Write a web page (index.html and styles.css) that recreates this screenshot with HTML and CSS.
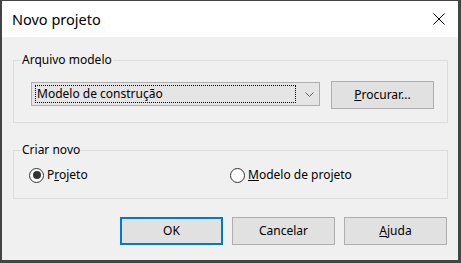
FILE: index.html
```html
<!DOCTYPE html>
<html lang="pt">
<head>
<meta charset="utf-8">
<title>Novo projeto</title>
<link rel="stylesheet" href="styles.css">
</head>
<body>
<div class="window">
  <div class="titlebar">
    <span class="title">Novo projeto</span>
    <svg class="close" width="12" height="12" viewBox="0 0 12 12">
      <path d="M0.5 0.5 L11.5 11.5 M11.5 0.5 L0.5 11.5" stroke="#000" stroke-width="1" fill="none"/>
    </svg>
  </div>
  <div class="content">
    <fieldset class="group">
      <legend class="legend">Arquivo modelo</legend>
      <div class="file-row">
        <div class="combo">
          <span class="combo-focus">Modelo de construção</span>
          <svg class="chevron" width="9" height="5" viewBox="0 0 9 5">
            <path d="M0.5 0.5 L4.5 4.5 L8.5 0.5" stroke="#606060" stroke-width="1" fill="none"/>
          </svg>
        </div>
        <button class="btn btn-browse"><u>P</u>rocurar...</button>
      </div>
    </fieldset>
    <fieldset class="group group-new">
      <legend class="legend">Criar novo</legend>
      <div class="radio-row">
        <label class="radio radio-first"><span class="radio-circle checked"></span><span>P<u>r</u>ojeto</span></label>
        <label class="radio"><span class="radio-circle"></span><span><u>M</u>odelo de projeto</span></label>
      </div>
    </fieldset>
    <div class="actions">
      <button class="btn btn-default">OK</button>
      <button class="btn">Cancelar</button>
      <button class="btn"><u>A</u>juda</button>
    </div>
  </div>
</div>
</body>
</html>
```
FILE: styles.css
```css
* { box-sizing: border-box; }
html, body { margin: 0; padding: 0; }
body {
  width: 461px;
  height: 263px;
  overflow: hidden;
  font-family: "Noto Sans", "Open Sans", sans-serif;
  font-size: 12px;
  color: #000;
}
.window {
  width: 461px;
  height: 263px;
  border-style: solid;
  border-color: #444444;
  border-width: 1px 3px 3px 2px;
  background: #f0f0f0;
  display: flex;
  flex-direction: column;
}
.titlebar {
  height: 36px;
  background: #fff;
  display: flex;
  align-items: center;
  justify-content: space-between;
  padding: 0 13px 0 10px;
  flex: none;
}
.title {
  font-size: 14.5px;
  line-height: 20px;
}
.close { display: block; }
.content {
  flex: 1;
  padding: 15px 10px 15px 11px;
  display: flex;
  flex-direction: column;
}
.group {
  margin: 0;
  padding: 0;
  border: 1px solid #dcdcdc;
  min-width: 0;
}
.legend {
  margin-left: 7px;
  padding: 0 1px;
  line-height: 16px;
  height: 16px;
}
.file-row {
  display: flex;
  align-items: flex-start;
  gap: 11px;
  padding: 13px 12px 13px 17px;
}
.combo {
  width: 289px;
  height: 24px;
  margin-top: 1px;
  border: 1px solid #adadad;
  background: #e5e5e5;
  display: flex;
  align-items: center;
  padding: 2px 5px 2px 3px;
  gap: 9px;
}
.combo-focus {
  flex: 1;
  height: 18px;
  border: 1px dotted #000;
  line-height: 15px;
  padding-left: 1px;
  white-space: nowrap;
}
.chevron { display: block; margin-top: 1px; }
.btn {
  width: 103px;
  height: 28px;
  margin: 0;
  padding: 0;
  border: 1px solid #adadad;
  background: #e1e1e1;
  font-family: inherit;
  font-size: 12px;
  color: #000;
  line-height: 16px;
}
.btn-default { border: 2px solid #0078d7; }
.group-new { margin-top: 19px; }
.radio-row {
  display: flex;
  padding: 9px 12px 15px 15px;
}
.radio {
  display: flex;
  align-items: center;
  gap: 3px;
  line-height: 16px;
  height: 16px;
}
.radio-first { width: 201px; }
.radio-circle {
  width: 15px;
  height: 15px;
  border: 1px solid #333;
  border-radius: 50%;
  background: #fff;
  display: flex;
  align-items: center;
  justify-content: center;
  flex: none;
}
.radio-circle.checked::after {
  content: "";
  width: 8px;
  height: 8px;
  border-radius: 50%;
  background: #333;
}
.actions {
  margin-top: 18px;
  display: flex;
  justify-content: flex-end;
  gap: 9px;
  padding-right: 1px;
}
```
